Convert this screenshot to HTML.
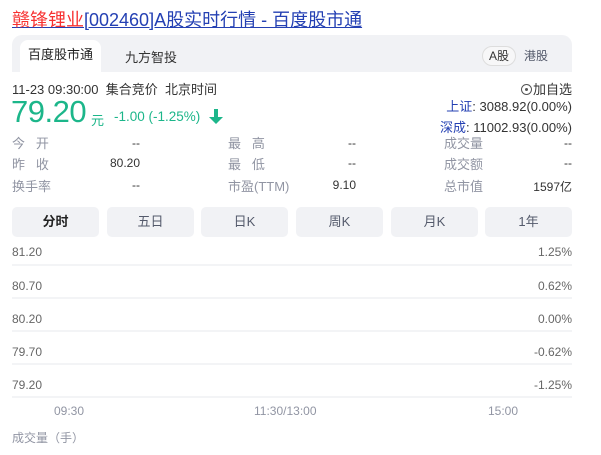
<!DOCTYPE html>
<html><head><meta charset="utf-8"><style>
*{margin:0;padding:0;box-sizing:border-box}
body{width:601px;height:455px;background:#fff;font-family:"Liberation Sans","Noto Sans CJK SC",sans-serif;color:#333;position:relative;overflow:hidden}
.a{position:absolute;white-space:nowrap}
.t{top:6px;left:12px;font-size:18px;color:#2440b3;text-decoration:underline}
.t span{color:#f73131}
.card{left:12px;top:35px;width:560px;height:37px;background:#f1f2f5;border-radius:10px 10px 0 0}
.tab1{left:20px;top:40px;width:81px;height:32px;background:#fff;border-radius:8px 8px 0 0;font-size:13px;color:#222;text-align:center;line-height:30px}
.f13{font-size:13px}
.lab{font-size:13px;color:#9195a3}
.val{font-size:12px;color:#333;text-align:right}
.btn{top:207px;height:30px;width:87px;background:#f1f2f5;border-radius:5px;font-size:13px;text-align:center;line-height:30px;color:#545a6b}
.g{left:12px;width:560px;height:2px;background:#f3f4f6}
.yl{left:12px;font-size:12px;color:#666}
.yr{right:29px;font-size:12px;color:#666;text-align:right}
.x{font-size:12px;color:#9195a3}
</style></head><body>
<div class="a t"><span>赣锋锂业</span>[002460]A股实时行情 - 百度股市通</div>
<div class="a card"></div>
<div class="a tab1">百度股市通</div>
<div class="a f13" style="left:125px;top:47px;color:#333">九方智投</div>
<div class="a" style="left:482px;top:46px;width:34px;height:20px;border:1px solid #ddd;border-radius:10px;font-size:12px;text-align:center;line-height:18px;background:#f7f7f8">A股</div>
<div class="a" style="left:524px;top:47px;font-size:12px;color:#545a6b">港股</div>
<div class="a" style="left:12px;top:79px;font-size:13px;color:#333">11-23 09:30:00 &nbsp;集合竞价 &nbsp;北京时间</div>
<div class="a" style="left:11px;top:94px;font-size:31px;color:#1cb68a;letter-spacing:-0.5px">79.20</div>
<div class="a" style="left:91px;top:110px;font-size:13px;color:#1cb68a">元</div>
<div class="a" style="left:114px;top:109px;font-size:13.5px;color:#1cb68a">-1.00 (-1.25%)</div>
<svg class="a" style="left:209px;top:109px" width="14" height="16"><path d="M5 0h4v8h5L7 15 0 8h5z" fill="#1cb68a"/></svg>
<div class="a" style="right:29px;top:79px;font-size:13px;color:#333"><span style="display:inline-block;width:11px;height:11px;border:1px solid #555;border-radius:50%;vertical-align:-1px;position:relative;margin-right:1px"><span style="position:absolute;left:3px;top:3px;width:3px;height:3px;background:#555;border-radius:50%"></span></span>加自选</div>
<div class="a" style="right:29px;top:96px;font-size:13px;color:#333"><span style="color:#2440b3">上证</span>: 3088.92(0.00%)</div>
<div class="a" style="right:29px;top:117px;font-size:13px;color:#333"><span style="color:#2440b3">深成</span>: 11002.93(0.00%)</div>

<div class="a lab" style="left:12px;top:133px">今&nbsp;&nbsp;&nbsp;开</div>
<div class="a lab" style="left:12px;top:154px">昨&nbsp;&nbsp;&nbsp;收</div>
<div class="a lab" style="left:12px;top:176px">换手率</div>
<div class="a val" style="right:461px;top:136px">--</div>
<div class="a val" style="right:461px;top:156px">80.20</div>
<div class="a val" style="right:461px;top:178px">--</div>
<div class="a lab" style="left:228px;top:133px">最&nbsp;&nbsp;&nbsp;高</div>
<div class="a lab" style="left:228px;top:154px">最&nbsp;&nbsp;&nbsp;低</div>
<div class="a lab" style="left:228px;top:176px">市盈(TTM)</div>
<div class="a val" style="right:245px;top:136px">--</div>
<div class="a val" style="right:245px;top:156px">--</div>
<div class="a val" style="right:245px;top:178px">9.10</div>
<div class="a lab" style="left:444px;top:133px">成交量</div>
<div class="a lab" style="left:444px;top:154px">成交额</div>
<div class="a lab" style="left:444px;top:176px">总市值</div>
<div class="a val" style="right:29px;top:136px">--</div>
<div class="a val" style="right:29px;top:156px">--</div>
<div class="a val" style="right:29px;top:178px">1597亿</div>

<div class="a btn" style="left:12px;color:#222;font-weight:bold">分时</div>
<div class="a btn" style="left:107px">五日</div>
<div class="a btn" style="left:201px">日K</div>
<div class="a btn" style="left:296px">周K</div>
<div class="a btn" style="left:391px">月K</div>
<div class="a btn" style="left:485px">1年</div>

<div class="a yl" style="top:245px">81.20</div><div class="a yr" style="top:245px">1.25%</div><div class="a g" style="top:264px"></div>
<div class="a yl" style="top:279px">80.70</div><div class="a yr" style="top:279px">0.62%</div><div class="a g" style="top:297px"></div>
<div class="a yl" style="top:312px">80.20</div><div class="a yr" style="top:312px">0.00%</div><div class="a g" style="top:330px"></div>
<div class="a yl" style="top:345px">79.70</div><div class="a yr" style="top:345px">-0.62%</div><div class="a g" style="top:363px"></div>
<div class="a yl" style="top:378px">79.20</div><div class="a yr" style="top:378px">-1.25%</div><div class="a g" style="top:396px"></div>
<div class="a x" style="left:54px;top:404px">09:30</div>
<div class="a x" style="left:254px;top:404px">11:30/13:00</div>
<div class="a x" style="left:488px;top:404px">15:00</div>
<div class="a x" style="left:12px;top:429px">成交量（手）</div>
</body></html>
